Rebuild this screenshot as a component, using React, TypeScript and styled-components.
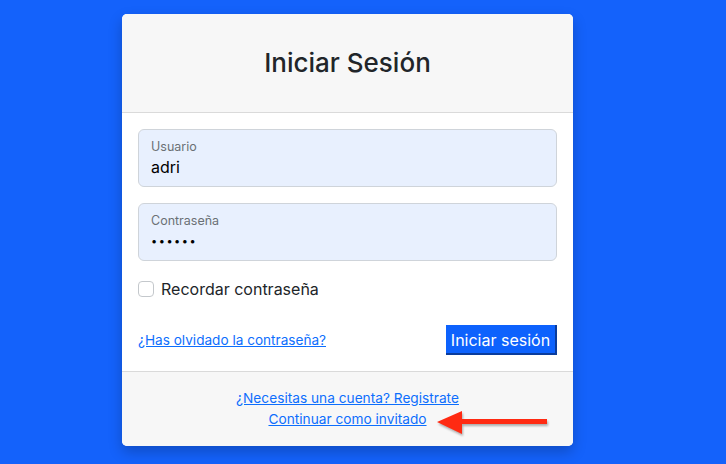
import { createGlobalStyle } from "styled-components";
import styled from "styled-components";

const GlobalStyle = createGlobalStyle`
  * {
    box-sizing: border-box;
  }

  body {
    margin: 0;
    background: #1462fb;
    font-family: Inter, "Liberation Sans", sans-serif;
    color: #212529;
  }
`;

const App = () => {
  return (
    <>
      <GlobalStyle />
      <Page>
        <Card>
          <Header>
            <Title>Iniciar Sesión</Title>
          </Header>
          <Body>
            <Field>
              <Label>Usuario</Label>
              <Value>adri</Value>
            </Field>
            <Field>
              <Label>Contraseña</Label>
              <Value $dots>••••••</Value>
            </Field>
            <CheckRow>
              <Box />
              <CheckLabel>Recordar contraseña</CheckLabel>
            </CheckRow>
            <Actions>
              <SmallLink href="#">¿Has olvidado la contraseña?</SmallLink>
              <Button>Iniciar sesión</Button>
            </Actions>
          </Body>
          <Footer>
            <FooterLink href="#">¿Necesitas una cuenta? Registrate</FooterLink>
            <FooterLink href="#">Continuar como invitado</FooterLink>
            <Arrow width="116" height="28" viewBox="0 0 116 28">
              <polygon points="2,13 27,2 27,10 112,10 112,15 27,15 27,25" fill="#ff2a12" />
            </Arrow>
          </Footer>
        </Card>
      </Page>
    </>
  );
};

export default App;

const Page = styled.div`
  padding: 14px 0 0 122px;
  height: 464px;
`;

const Card = styled.div`
  width: 451px;
  background: #fff;
  border-radius: 5px;
  overflow: hidden;
  box-shadow: 0 6px 14px rgba(0, 0, 0, 0.22);
`;

const Header = styled.div`
  height: 99px;
  background: #f7f7f7;
  border-bottom: 1px solid #dadada;
  display: flex;
  align-items: center;
  justify-content: center;
`;

const Title = styled.h1`
  margin: 0 0 2px;
  font-size: 26px;
  font-weight: 500;
  color: #212529;
`;

const Body = styled.div`
  padding: 16px;
  display: flex;
  flex-direction: column;
`;

const Field = styled.div`
  height: 58px;
  border: 1px solid #cfd4da;
  border-radius: 6px;
  background: #e8f0fe;
  padding: 9px 12px 0;
  margin-bottom: 16px;
`;

const Label = styled.div`
  font-size: 12.5px;
  color: #6b7075;
  line-height: 16px;
`;

const Value = styled.div<{ $dots?: boolean }>`
  font-size: ${(p) => (p.$dots ? "11px" : "16px")};
  letter-spacing: ${(p) => (p.$dots ? "1.5px" : "0")};
  color: #000;
  line-height: 22px;
  margin-top: 1px;
`;

const CheckRow = styled.div`
  display: flex;
  align-items: center;
  gap: 7px;
  margin-top: 2px;
`;

const Box = styled.span`
  width: 16px;
  height: 16px;
  border: 1px solid #c4c8cc;
  border-radius: 4px;
  background: #fff;
`;

const CheckLabel = styled.span`
  font-size: 16px;
  color: #212529;
`;

const Actions = styled.div`
  display: flex;
  justify-content: space-between;
  align-items: center;
  margin-top: 26px;
`;

const SmallLink = styled.a`
  font-size: 13.6px;
  color: #0d6efd;
`;

const Button = styled.button`
  width: 111px;
  height: 30px;
  border: none;
  border-radius: 0;
  background: #0d62fd;
  color: #fff;
  font-family: inherit;
  font-size: 16px;
  padding: 0 2px 1px 0;
  box-shadow: inset -2px -2px 0 #0a3c9c;
`;

const Footer = styled.div`
  position: relative;
  background: #f7f7f7;
  border-top: 1px solid #dadada;
  height: 75px;
  padding-top: 16px;
  display: flex;
  flex-direction: column;
  align-items: center;
`;

const FooterLink = styled.a`
  font-size: 13.7px;
  line-height: 21px;
  color: #0d6efd;
`;

const Arrow = styled.svg`
  position: absolute;
  left: 313px;
  top: 37px;
  filter: drop-shadow(1px 2px 1px rgba(0, 0, 0, 0.3));
`;
